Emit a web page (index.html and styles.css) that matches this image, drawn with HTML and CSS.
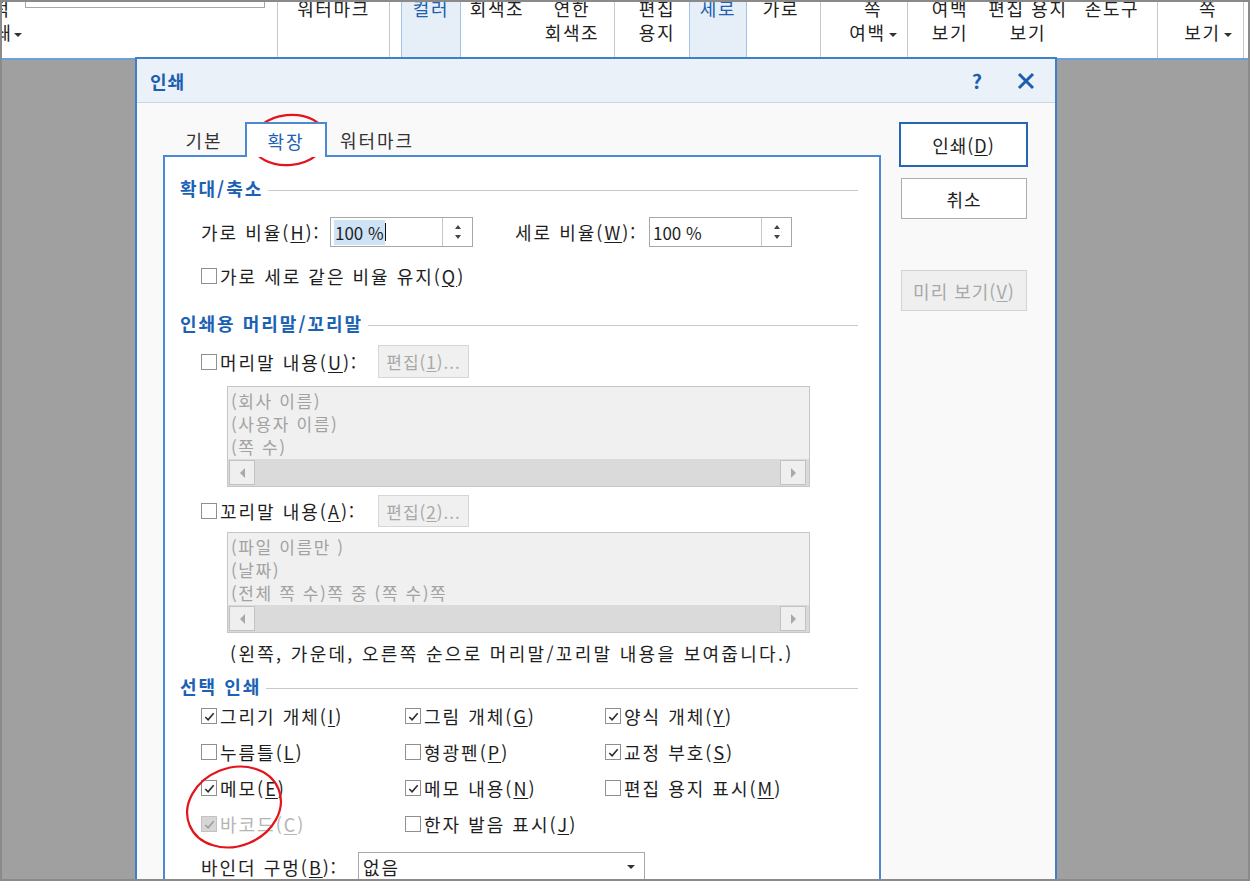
FILE: index.html
```html
<!DOCTYPE html>
<html lang="ko">
<head>
    <meta charset="UTF-8">
    <meta name="viewport" content="width=device-width, initial-scale=1.0">
    <title>인쇄</title>
    <link rel="stylesheet" href="styles.css">
</head>
<body>
    <div class="screen">
        <!-- 상단 리본 (잘린 부분) -->
        <div class="ribbon">
            <div class="rb-cut">
                <span>적</span>
                <span>쇄<i class="drop"></i></span>
            </div>
            <div class="rb-field"><div class="rb-input"></div></div>
            <div class="rb-group g-water">
                <div class="rb-btn"><span>워터마크</span></div>
            </div>
            <div class="rb-group g-color">
                <div class="rb-btn active w60"><span>컬러</span></div>
                <div class="rb-btn w72"><span>회색조</span></div>
                <div class="rb-btn w78"><span>연한</span><span>회색조</span></div>
            </div>
            <div class="rb-group g-paper">
                <div class="rb-btn w64"><span>편집</span><span>용지</span></div>
                <div class="rb-btn active w58"><span>세로</span></div>
                <div class="rb-btn w68"><span>가로</span></div>
            </div>
            <div class="rb-group g-margin">
                <div class="rb-btn w60"><span>쪽</span><span>여백<i class="drop"></i></span></div>
            </div>
            <div class="rb-group g-view">
                <div class="rb-btn w70"><span>여백</span><span>보기</span></div>
                <div class="rb-btn w86"><span>편집 용지</span><span>보기</span></div>
                <div class="rb-btn w82"><span>손도구</span></div>
            </div>
            <div class="rb-group g-page">
                <div class="rb-btn w60"><span>쪽</span><span>보기<i class="drop"></i></span></div>
            </div>
            <div class="rb-group g-end"></div>
        </div>

        <!-- 인쇄 대화상자 -->
        <div class="dialog">
            <div class="dlg-title">
                <span class="dlg-name">인쇄</span>
                <span class="dlg-help">?</span>
                <span class="dlg-close">
                    <svg width="18" height="18" viewBox="0 0 18 18"><path d="M2 2 L16 16 M16 2 L2 16" stroke="#1b5fae" stroke-width="3" fill="none"/></svg>
                </span>
            </div>

            <div class="dlg-body">
                <div class="tabs-area">
                    <div class="tabs">
                        <div class="tab t1">기본</div>
                        <div class="tab t2 active">확장</div>
                        <div class="tab t3">워터마크</div>
                    </div>

                    <div class="panel">
                        <div class="sec-title"><span>확대/축소</span></div>
                        <div class="ratio-row">
                            <label class="lbl-h">가로 비율(<u>H</u>):</label>
                            <div class="spin">
                                <div class="spin-text"><span class="sel">100 %</span><span class="caret"></span></div>
                                <div class="spin-btn"><i class="up"></i><i class="down"></i></div>
                            </div>
                            <label class="lbl-w">세로 비율(<u>W</u>):</label>
                            <div class="spin">
                                <div class="spin-text"><span>100 %</span></div>
                                <div class="spin-btn"><i class="up"></i><i class="down"></i></div>
                            </div>
                        </div>
                        <div class="opt-row keep">
                            <span class="cb"></span>가로 세로 같은 비율 유지(<u>Q</u>)
                        </div>

                        <div class="sec-title s2"><span>인쇄용 머리말/꼬리말</span></div>
                        <div class="hf-row">
                            <span class="cb"></span><span class="hf-label">머리말 내용(<u>U</u>):</span>
                            <span class="btn-off">편집(<u>1</u>)...</span>
                        </div>
                        <div class="preview-box">
                            <div class="lines">
                                <div>(회사 이름)</div>
                                <div>(사용자 이름)</div>
                                <div>(쪽 수)</div>
                            </div>
                            <div class="hscroll"><span class="arr left"></span><span class="arr right"></span></div>
                        </div>
                        <div class="hf-row foot">
                            <span class="cb"></span><span class="hf-label">꼬리말 내용(<u>A</u>):</span>
                            <span class="btn-off">편집(<u>2</u>)...</span>
                        </div>
                        <div class="preview-box b2">
                            <div class="lines">
                                <div>(파일 이름만 )</div>
                                <div>(날짜)</div>
                                <div>(전체 쪽 수)쪽 중 (쪽 수)쪽</div>
                            </div>
                            <div class="hscroll"><span class="arr left"></span><span class="arr right"></span></div>
                        </div>
                        <div class="note">(왼쪽, 가운데, 오른쪽 순으로 머리말/꼬리말 내용을 보여줍니다.)</div>

                        <div class="sec-title s3"><span>선택 인쇄</span></div>
                        <div class="opt-grid">
                            <div class="opt"><span class="cb on"><svg viewBox="0 0 14 14"><path d="M2.5 7.5 L5.5 10.5 L11.5 3.5"/></svg></span>그리기 개체(<u>I</u>)</div>
                            <div class="opt"><span class="cb on"><svg viewBox="0 0 14 14"><path d="M2.5 7.5 L5.5 10.5 L11.5 3.5"/></svg></span>그림 개체(<u>G</u>)</div>
                            <div class="opt"><span class="cb on"><svg viewBox="0 0 14 14"><path d="M2.5 7.5 L5.5 10.5 L11.5 3.5"/></svg></span>양식 개체(<u>Y</u>)</div>

                            <div class="opt"><span class="cb"></span>누름틀(<u>L</u>)</div>
                            <div class="opt"><span class="cb"></span>형광펜(<u>P</u>)</div>
                            <div class="opt"><span class="cb on"><svg viewBox="0 0 14 14"><path d="M2.5 7.5 L5.5 10.5 L11.5 3.5"/></svg></span>교정 부호(<u>S</u>)</div>

                            <div class="opt"><span class="cb on"><svg viewBox="0 0 14 14"><path d="M2.5 7.5 L5.5 10.5 L11.5 3.5"/></svg></span>메모(<u>E</u>)</div>
                            <div class="opt"><span class="cb on"><svg viewBox="0 0 14 14"><path d="M2.5 7.5 L5.5 10.5 L11.5 3.5"/></svg></span>메모 내용(<u>N</u>)</div>
                            <div class="opt"><span class="cb"></span>편집 용지 표시(<u>M</u>)</div>

                            <div class="opt disabled"><span class="cb on"><svg viewBox="0 0 14 14"><path d="M2.5 7.5 L5.5 10.5 L11.5 3.5"/></svg></span>바코드(<u>C</u>)</div>
                            <div class="opt"><span class="cb"></span>한자 발음 표시(<u>J</u>)</div>
                        </div>
                        <div class="binder-row">
                            <label>바인더 구멍(<u>B</u>):</label>
                            <div class="select"><span>없음</span><i class="drop"></i></div>
                        </div>
                    </div>
                </div>

                <div class="btn-col">
                    <div class="btn primary">인쇄(<u>D</u>)</div>
                    <div class="btn">취소</div>
                    <div class="btn off">미리 보기(<u>V</u>)</div>
                </div>
            </div>
        </div>

        <!-- 빨간 표시 -->
        <svg class="annot" width="1250" height="881" viewBox="0 0 1250 881">
            <ellipse cx="287" cy="138" rx="37" ry="25" transform="rotate(-6 287 138)"/>
            <ellipse cx="232" cy="805" rx="48" ry="39" transform="rotate(-22 232 805)"/>
        </svg>
    </div>
</body>
</html>
```

FILE: styles.css
```css
* {
    margin: 0;
    padding: 0;
    box-sizing: border-box;
}

body {
    font-family: "Noto Sans CJK KR", "Noto Sans", sans-serif;
    font-size: 18px;
    letter-spacing: 2px;
    color: #1e1e1e;
    background-color: #fff;
}

u {
    text-decoration: underline;
    text-underline-offset: 2px;
}

.screen {
    position: relative;
    width: 1250px;
    height: 881px;
    border: 2px solid #8a8a8a;
    background-color: #a0a0a0;
    overflow: hidden;
}

/* 리본 */
.ribbon {
    display: flex;
    height: 58px;
    background-color: #fff;
    border-bottom: 2px solid #6e9fd6;
    overflow: hidden;
    letter-spacing: 1.6px;
}

.drop {
    display: inline-block;
    width: 0;
    height: 0;
    border-left: 4px solid transparent;
    border-right: 4px solid transparent;
    border-top: 4px solid #333;
    margin-left: 3px;
    vertical-align: middle;
}

.rb-cut {
    width: 20px;
    display: flex;
    flex-direction: column;
    align-items: flex-end;
    margin-top: -6px;
    line-height: 24px;
    overflow: hidden;
    white-space: nowrap;
    letter-spacing: 0;
    color: #222;
}

.rb-cut span:first-child {
    margin-right: 13px;
}

.rb-field {
    width: 255px;
}

.rb-input {
    width: 240px;
    height: 6px;
    margin-left: 3px;
    border: 1px solid #a9a9a9;
    border-top: none;
}

.rb-group {
    display: flex;
    border-left: 1px solid #c9c9c9;
    height: 100%;
}

.g-water { width: 112px; justify-content: center; }
.g-color { width: 225px; padding-left: 11px; }
.g-paper { width: 206px; padding-left: 10px; }
.g-margin { width: 87px; padding-left: 22px; }
.g-view { width: 250px; padding-left: 7px; }
.g-page { width: 86px; padding-left: 20px; }
.g-end { width: 5px; }

.rb-btn {
    display: flex;
    flex-direction: column;
    align-items: center;
    line-height: 24px;
    margin-top: -6px;
    height: calc(100% + 6px);
    color: #222;
    white-space: nowrap;
}

.rb-btn.active {
    background-color: #e6eef8;
    border-left: 1px solid #a3c2e4;
    border-right: 1px solid #a3c2e4;
    color: #2060b0;
}

.w58 { width: 58px; }
.w60 { width: 60px; }
.w64 { width: 64px; }
.w68 { width: 68px; }
.w70 { width: 70px; }
.w72 { width: 72px; }
.w78 { width: 78px; }
.w82 { width: 82px; }
.w86 { width: 86px; }

/* 대화상자 */
.dialog {
    position: absolute;
    left: 133px;
    top: 55px;
    width: 922px;
    height: 840px;
    border: 2px solid #3d7fc8;
    border-bottom: none;
    background-color: #f9f9f9;
}

.dlg-title {
    display: flex;
    align-items: center;
    height: 44px;
    padding-left: 13px;
    background-color: #eaf1f9;
    border-bottom: 1px solid #c8d7ea;
}

.dlg-name {
    font-weight: bold;
    color: #1b5fae;
    flex: 1;
    letter-spacing: 1px;
}

.dlg-help {
    width: 20px;
    text-align: center;
    font-size: 20px;
    font-weight: bold;
    color: #1b5fae;
    margin-right: 18px;
}

.dlg-close {
    width: 40px;
    display: flex;
    justify-content: center;
    margin-right: 9px;
}

.dlg-body {
    display: flex;
    padding: 19px 0 0 26px;
}

.tabs-area {
    width: 718px;
}

.tabs {
    display: flex;
    height: 35px;
    margin-bottom: -2px;
    position: relative;
    z-index: 1;
}

.tab {
    display: flex;
    align-items: center;
    justify-content: center;
    height: 35px;
    color: #333;
}

.t1 { width: 82px; }
.t2 { width: 82px; }
.t3 { width: 100px; }

.tab.active {
    background-color: #fff;
    border: 2px solid #4a8ad0;
    border-bottom: none;
    color: #1b62b5;
}

.panel {
    height: 760px;
    background-color: #fff;
    border: 2px solid #4a8ad0;
    padding: 19px 21px 0 15px;
}

.sec-title {
    display: flex;
    align-items: center;
    height: 24px;
    font-weight: bold;
    color: #1b62b5;
}

.sec-title::after {
    content: "";
    flex: 1;
    height: 1px;
    margin: 4px 0 0 5px;
    background-color: #c9c9c9;
}

.sec-title.s2 { margin-top: 23px; }
.sec-title.s3 { margin-top: 9px; }

.ratio-row {
    display: flex;
    align-items: center;
    height: 30px;
    margin-top: 17px;
    padding-left: 21px;
}

.ratio-row .lbl-h {
    width: 129px;
    white-space: nowrap;
}

.ratio-row .lbl-w {
    width: 134px;
    margin-left: 42px;
    white-space: nowrap;
}

.spin {
    display: flex;
    height: 30px;
    border: 1px solid #a8a8a8;
}

.spin-text {
    width: 111px;
    display: flex;
    align-items: center;
    padding-left: 3px;
    font-size: 17px;
    letter-spacing: 0;
}

.spin-text .sel {
    background-color: #cfe3f6;
    padding: 0 1px;
}

.spin-text .caret {
    width: 1px;
    height: 18px;
    background-color: #111;
}

.spin-btn {
    width: 30px;
    border-left: 1px solid #c6c6c6;
    display: flex;
    flex-direction: column;
    align-items: center;
    justify-content: center;
    gap: 6px;
}

.spin-btn i {
    width: 0;
    height: 0;
    border-left: 3px solid transparent;
    border-right: 3px solid transparent;
}

.spin-btn .up { border-bottom: 4px solid #444; }
.spin-btn .down { border-top: 4px solid #444; }

.cb {
    display: inline-flex;
    align-items: center;
    justify-content: center;
    width: 16px;
    height: 16px;
    border: 1px solid #8f8f8f;
    background-color: #fff;
    margin-right: 3px;
    flex-shrink: 0;
}

.cb svg {
    width: 13px;
    height: 13px;
}

.cb svg path {
    fill: none;
    stroke: #2a2a2a;
    stroke-width: 1.7;
}

.opt-row {
    display: flex;
    align-items: center;
    padding-left: 21px;
}

.opt-row.keep {
    height: 24px;
    margin-top: 17px;
}

.hf-row {
    display: flex;
    align-items: center;
    height: 33px;
    margin-top: 10px;
    padding-left: 21px;
}

.hf-row.foot {
    height: 32px;
    margin-top: 8px;
}

.hf-label {
    width: 158px;
    white-space: nowrap;
}

.btn-off {
    display: flex;
    align-items: center;
    justify-content: center;
    width: 91px;
    height: 100%;
    background-color: #f0f0f0;
    border: 1px solid #d6d6d6;
    color: #a8a8a8;
    font-size: 17px;
    letter-spacing: 1px;
}

.preview-box {
    display: flex;
    flex-direction: column;
    width: 583px;
    height: 101px;
    margin: 8px 0 0 47px;
    background-color: #f0f0f0;
    border: 1px solid #c6c6c6;
}

.preview-box.b2 {
    margin-top: 5px;
}

.preview-box .lines {
    flex: 1;
    padding: 2px 0 0 3px;
    line-height: 23px;
    font-size: 17px;
    letter-spacing: 1.6px;
    color: #a2a2a2;
}

.hscroll {
    display: flex;
    justify-content: space-between;
    align-items: center;
    height: 27px;
    padding: 0 3px 0 1px;
    background-color: #dadada;
}

.arr {
    display: flex;
    align-items: center;
    justify-content: center;
    width: 26px;
    height: 25px;
    background-color: #efefef;
    border: 1px solid #c2c2c2;
}

.arr::before {
    content: "";
    width: 0;
    height: 0;
    border-top: 5px solid transparent;
    border-bottom: 5px solid transparent;
}

.arr.left::before { border-right: 5px solid #a9a9a9; }
.arr.right::before { border-left: 5px solid #a9a9a9; }

.note {
    margin-top: 8px;
    padding-left: 50px;
    line-height: 24px;
    letter-spacing: 2.3px;
    white-space: nowrap;
}

.opt-grid {
    display: grid;
    grid-template-columns: 204px 200px 1fr;
    grid-auto-rows: 36px;
    padding-left: 21px;
}

.opt {
    display: flex;
    align-items: center;
    white-space: nowrap;
}

.opt.disabled {
    color: #b4b4b4;
}

.opt.disabled .cb {
    background-color: #d6d6d6;
    border-color: #c2c2c2;
}

.opt.disabled .cb svg path {
    stroke: #9c9c9c;
}

.binder-row {
    display: flex;
    align-items: center;
    height: 30px;
    margin-top: 10px;
    padding-left: 21px;
}

.binder-row label {
    width: 157px;
    white-space: nowrap;
}

.select {
    display: flex;
    align-items: center;
    justify-content: space-between;
    width: 287px;
    height: 30px;
    padding: 0 9px 0 4px;
    background-color: #fff;
    border: 1px solid #a8a8a8;
}

/* 오른쪽 버튼 */
.btn-col {
    display: flex;
    flex-direction: column;
    margin-left: 18px;
    width: 129px;
}

.btn {
    display: flex;
    align-items: center;
    justify-content: center;
    width: 126px;
    height: 41px;
    margin-left: 2px;
    margin-top: 11px;
    background-color: #fff;
    border: 1px solid #adadad;
    letter-spacing: 1px;
}

.btn.primary {
    width: 129px;
    height: 45px;
    margin: 0;
    border: 2px solid #2566b4;
}

.btn.off {
    margin-top: 51px;
    background-color: #efefef;
    border-color: #d3d3d3;
    color: #a8a8a8;
}

/* 표시 */
.annot {
    position: absolute;
    left: 0;
    top: 0;
    pointer-events: none;
}

.annot ellipse {
    fill: none;
    stroke: #e3141c;
    stroke-width: 2.2;
}
```
